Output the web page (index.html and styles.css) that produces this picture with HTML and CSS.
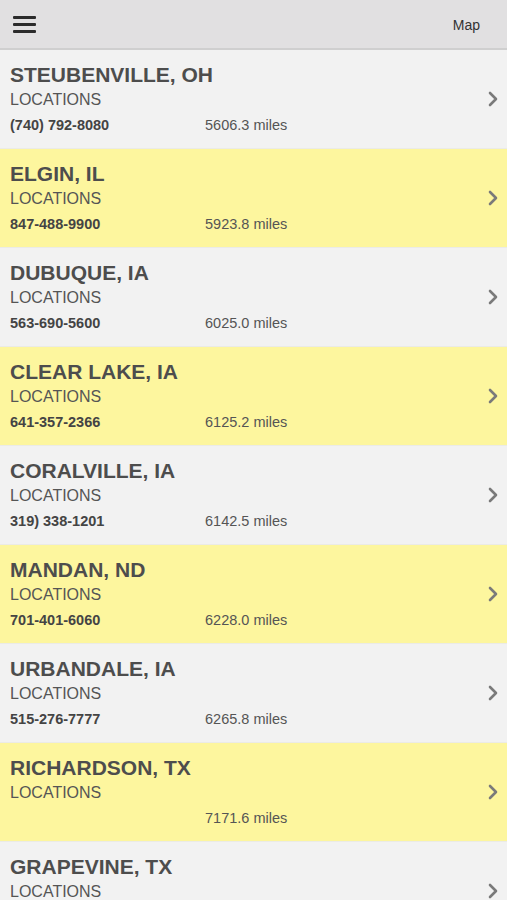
FILE: index.html
```html
<!DOCTYPE html>
<html>
<head>
<meta charset="utf-8">
<link rel="stylesheet" href="styles.css">
</head>
<body>
<header class="topbar">
  <div class="menu"><span></span><span></span><span></span></div>
  <div class="map">Map</div>
</header>
<ul class="list">
  <li class="row gray"><div class="info"><div class="title">STEUBENVILLE, OH</div><div class="sub">LOCATIONS</div><div class="meta"><span class="phone">(740) 792-8080</span><span class="dist">5606.3 miles</span></div></div><svg class="chev" viewBox="0 0 10 16"><path d="M2 2 L8 8 L2 14"/></svg></li>
  <li class="row yellow"><div class="info"><div class="title">ELGIN, IL</div><div class="sub">LOCATIONS</div><div class="meta"><span class="phone">847-488-9900</span><span class="dist">5923.8 miles</span></div></div><svg class="chev" viewBox="0 0 10 16"><path d="M2 2 L8 8 L2 14"/></svg></li>
  <li class="row gray"><div class="info"><div class="title">DUBUQUE, IA</div><div class="sub">LOCATIONS</div><div class="meta"><span class="phone">563-690-5600</span><span class="dist">6025.0 miles</span></div></div><svg class="chev" viewBox="0 0 10 16"><path d="M2 2 L8 8 L2 14"/></svg></li>
  <li class="row yellow"><div class="info"><div class="title">CLEAR LAKE, IA</div><div class="sub">LOCATIONS</div><div class="meta"><span class="phone">641-357-2366</span><span class="dist">6125.2 miles</span></div></div><svg class="chev" viewBox="0 0 10 16"><path d="M2 2 L8 8 L2 14"/></svg></li>
  <li class="row gray"><div class="info"><div class="title">CORALVILLE, IA</div><div class="sub">LOCATIONS</div><div class="meta"><span class="phone">319) 338-1201</span><span class="dist">6142.5 miles</span></div></div><svg class="chev" viewBox="0 0 10 16"><path d="M2 2 L8 8 L2 14"/></svg></li>
  <li class="row yellow"><div class="info"><div class="title">MANDAN, ND</div><div class="sub">LOCATIONS</div><div class="meta"><span class="phone">701-401-6060</span><span class="dist">6228.0 miles</span></div></div><svg class="chev" viewBox="0 0 10 16"><path d="M2 2 L8 8 L2 14"/></svg></li>
  <li class="row gray"><div class="info"><div class="title">URBANDALE, IA</div><div class="sub">LOCATIONS</div><div class="meta"><span class="phone">515-276-7777</span><span class="dist">6265.8 miles</span></div></div><svg class="chev" viewBox="0 0 10 16"><path d="M2 2 L8 8 L2 14"/></svg></li>
  <li class="row yellow"><div class="info"><div class="title">RICHARDSON, TX</div><div class="sub">LOCATIONS</div><div class="meta"><span class="phone"></span><span class="dist">7171.6 miles</span></div></div><svg class="chev" viewBox="0 0 10 16"><path d="M2 2 L8 8 L2 14"/></svg></li>
  <li class="row gray"><div class="info"><div class="title">GRAPEVINE, TX</div><div class="sub">LOCATIONS</div><div class="meta"><span class="phone"></span><span class="dist"></span></div></div><svg class="chev" viewBox="0 0 10 16"><path d="M2 2 L8 8 L2 14"/></svg></li>
</ul>
</body>
</html>
```
FILE: styles.css
```css
* { box-sizing: border-box; }
html, body { margin: 0; padding: 0; }
body {
  width: 507px;
  height: 900px;
  overflow: hidden;
  background: #f2f2f2;
  font-family: "Liberation Sans", Arial, sans-serif;
  color: #4d4d4d;
}
.topbar {
  height: 50px;
  background: #e1e0e1;
  border-bottom: 2px solid #cfcfcf;
  display: flex;
  align-items: center;
  justify-content: space-between;
  padding: 0 27px 0 13px;
}
.menu {
  display: flex;
  flex-direction: column;
  gap: 4px;
  width: 23px;
}
.menu span {
  display: block;
  height: 3px;
  background: #2b2b2b;
  border-radius: 1px;
}
.map {
  font-size: 14px;
  color: #333;
  margin-top: 1px;
}
.list { list-style: none; margin: 0; padding: 0; }
.row {
  height: 99px;
  display: flex;
  align-items: center;
  padding: 0 9px 0 10px;
  border-bottom: 1px solid #ebebe6;
}
.row.gray { background: #f2f2f2; }
.row.yellow { background: #fdf69e; }
.info { flex: 1; }
.title {
  font-size: 21px;
  font-weight: bold;
  line-height: 24px;
  margin-top: -1px;
  color: #4d4d4d;
}
.sub {
  font-size: 16px;
  line-height: 22px;
  color: #555;
  margin-top: 2px;
}
.meta {
  display: flex;
  font-size: 14.5px;
  line-height: 20px;
  margin-top: 4px;
  height: 20px;
}
.phone { width: 195px; font-weight: bold; color: #444; }
.dist { color: #555; }
.chev {
  width: 10px;
  height: 16px;
  fill: none;
  stroke: #7a7a7a;
  stroke-width: 2.6;
  stroke-linecap: round;
  stroke-linejoin: round;
}
```
